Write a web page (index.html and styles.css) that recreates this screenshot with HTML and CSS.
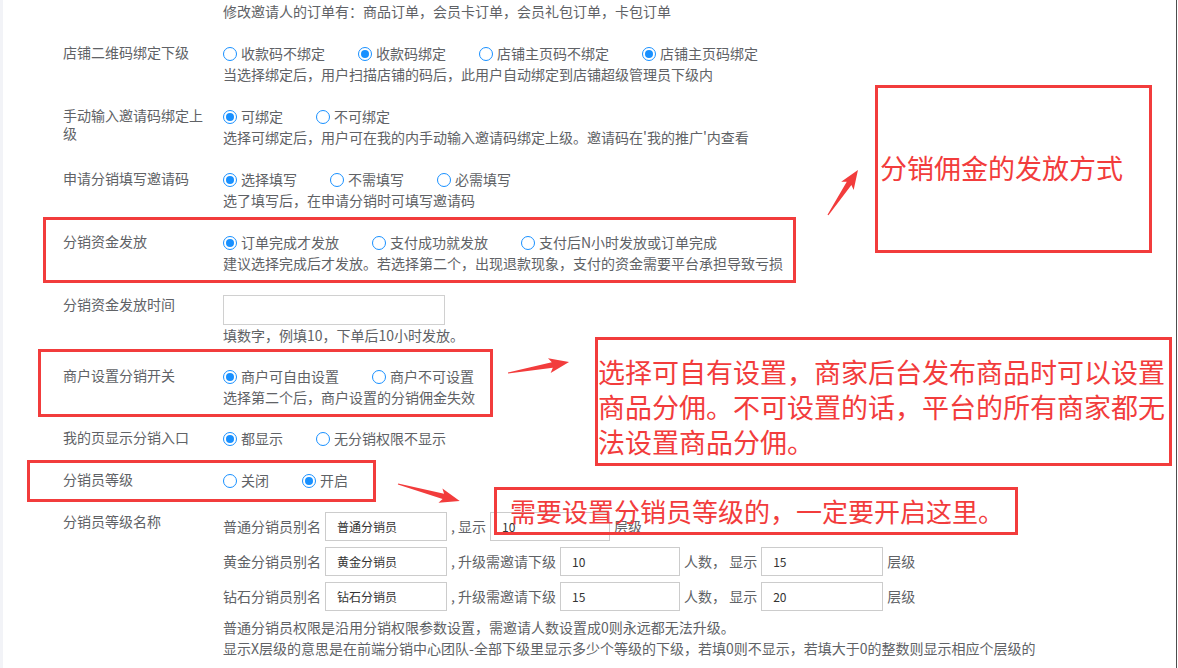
FILE: index.html
```html
<!DOCTYPE html>
<html lang="zh-CN">
<head>
  <meta charset="UTF-8">
  <meta name="viewport" content="width=device-width, initial-scale=1.0">
  <title>分销设置</title>
  <link rel="stylesheet" href="styles.css">
</head>
<body>
  <div class="page">
    <div class="form">
      <div class="row">
        <div class="label"></div>
        <div class="field">
          <p class="tip">修改邀请人的订单有：商品订单，会员卡订单，会员礼包订单，卡包订单</p>
        </div>
      </div>

      <div class="row">
        <div class="label">店铺二维码绑定下级</div>
        <div class="field">
          <div class="radios">
            <label class="radio"><i></i>收款码不绑定</label>
            <label class="radio on"><i></i>收款码绑定</label>
            <label class="radio"><i></i>店铺主页码不绑定</label>
            <label class="radio on"><i></i>店铺主页码绑定</label>
          </div>
          <p class="tip">当选择绑定后，用户扫描店铺的码后，此用户自动绑定到店铺超级管理员下级内</p>
        </div>
      </div>

      <div class="row">
        <div class="label">手动输入邀请码绑定上级</div>
        <div class="field">
          <div class="radios">
            <label class="radio on"><i></i>可绑定</label>
            <label class="radio"><i></i>不可绑定</label>
          </div>
          <p class="tip">选择可绑定后，用户可在我的内手动输入邀请码绑定上级。邀请码在'我的推广'内查看</p>
        </div>
      </div>

      <div class="row">
        <div class="label">申请分销填写邀请码</div>
        <div class="field">
          <div class="radios">
            <label class="radio on"><i></i>选择填写</label>
            <label class="radio"><i></i>不需填写</label>
            <label class="radio"><i></i>必需填写</label>
          </div>
          <p class="tip">选了填写后，在申请分销时可填写邀请码</p>
        </div>
      </div>

      <div class="row">
        <div class="label">分销资金发放</div>
        <div class="field">
          <div class="radios">
            <label class="radio on"><i></i>订单完成才发放</label>
            <label class="radio"><i></i>支付成功就发放</label>
            <label class="radio"><i></i>支付后N小时发放或订单完成</label>
          </div>
          <p class="tip">建议选择完成后才发放。若选择第二个，出现退款现象，支付的资金需要平台承担导致亏损</p>
        </div>
      </div>

      <div class="row">
        <div class="label">分销资金发放时间</div>
        <div class="field">
          <input class="time-input" type="text">
          <p class="tip">填数字，例填10，下单后10小时发放。</p>
        </div>
      </div>

      <div class="row tight">
        <div class="label">商户设置分销开关</div>
        <div class="field">
          <div class="radios">
            <label class="radio on"><i></i>商户可自由设置</label>
            <label class="radio"><i></i>商户不可设置</label>
          </div>
          <p class="tip">选择第二个后，商户设置的分销佣金失效</p>
        </div>
      </div>

      <div class="row tight">
        <div class="label">我的页显示分销入口</div>
        <div class="field">
          <div class="radios">
            <label class="radio on"><i></i>都显示</label>
            <label class="radio"><i></i>无分销权限不显示</label>
          </div>
        </div>
      </div>

      <div class="row">
        <div class="label">分销员等级</div>
        <div class="field">
          <div class="radios">
            <label class="radio"><i></i>关闭</label>
            <label class="radio on"><i></i>开启</label>
          </div>
        </div>
      </div>

      <div class="row">
        <div class="label">分销员等级名称</div>
        <div class="field">
          <div class="level-row">
            <span>普通分销员别名</span>
            <input class="name" type="text" value="普通分销员">
            <span>, 显示</span>
            <input class="num" type="text" value="10">
            <span>层级</span>
          </div>
          <div class="level-row">
            <span>黄金分销员别名</span>
            <input class="name" type="text" value="黄金分销员">
            <span>, 升级需邀请下级</span>
            <input class="num" type="text" value="10">
            <span>人数， 显示</span>
            <input class="name" type="text" value="15">
            <span>层级</span>
          </div>
          <div class="level-row">
            <span>钻石分销员别名</span>
            <input class="name" type="text" value="钻石分销员">
            <span>, 升级需邀请下级</span>
            <input class="num" type="text" value="15">
            <span>人数， 显示</span>
            <input class="name" type="text" value="20">
            <span>层级</span>
          </div>
          <p class="tip level-tip">普通分销员权限是沿用分销权限参数设置，需邀请人数设置成0则永远都无法升级。<br>显示X层级的意思是在前端分销中心团队-全部下级里显示多少个等级的下级，若填0则不显示，若填大于0的整数则显示相应个层级的</p>
        </div>
      </div>
    </div>

    <!-- 标注 -->
    <div class="mark mark-pay"></div>
    <div class="mark mark-shop"></div>
    <div class="mark mark-level"></div>

    <div class="note note-a">分销佣金的发放方式</div>
    <div class="note note-b">选择可自有设置，商家后台发布商品时可以设置<br>商品分佣。不可设置的话，平台的所有商家都无<br>法设置商品分佣。</div>
    <div class="note note-c">需要设置分销员等级的，一定要开启这里。</div>

    <svg class="arrows" width="1178" height="668" viewBox="0 0 1178 668">
      <g fill="#f23c3c">
        <polygon transform="translate(828 215) rotate(-56.3)" points="0,-0.6 38,-2.8 35,-7.5 54,0 35,7.5 38,2.8 0,0.6"/>
        <polygon transform="translate(508 373) rotate(-10.2)" points="0,-0.6 45,-2.8 42,-7.5 62,0 42,7.5 45,2.8 0,0.6"/>
        <polygon transform="translate(398 484) rotate(15.3)" points="0,-0.6 47,-2.8 44,-7.5 64,0 44,7.5 47,2.8 0,0.6"/>
      </g>
    </svg>
  </div>
</body>
</html>
```

FILE: styles.css
```css
body {
  margin: 0;
  font-family: "Noto Sans CJK SC", "Liberation Sans", sans-serif;
  font-size: 14px;
  color: #606266;
  background-color: #ffffff;
}

.page {
  position: relative;
  width: 1177px;
  min-height: 100vh;
  box-sizing: border-box;
  padding: 1px 0 0 63px;
  border-right: 1px solid #4d4d4d;
  background: linear-gradient(to right, #f2f3f7 3px, #ffffff 3px);
}

.form {
  display: flex;
  flex-direction: column;
  gap: 21px;
}

.row {
  display: grid;
  grid-template-columns: 160px 1fr;
}

.row.tight {
  margin-top: -1px;
}

.label {
  line-height: 18px;
  padding-right: 14px;
}

.field {
  line-height: 21px;
}

.tip {
  margin: 0;
  white-space: nowrap;
}

.radios {
  display: flex;
}

.radio {
  display: inline-flex;
  align-items: center;
  margin-right: 33px;
}

.radio i {
  position: relative;
  width: 14px;
  height: 14px;
  box-sizing: border-box;
  border: 1px solid #1890ff;
  border-radius: 50%;
  margin-right: 4px;
  background-color: #ffffff;
}

.radio.on i::after {
  content: "";
  position: absolute;
  top: 2px;
  left: 2px;
  width: 8px;
  height: 8px;
  border-radius: 50%;
  background-color: #1890ff;
}

.time-input {
  display: block;
  width: 222px;
  height: 30px;
  box-sizing: border-box;
  border: 1px solid #d0d0d0;
  margin: 0;
}

.level-row {
  display: flex;
  align-items: center;
  gap: 4px;
  height: 29px;
  white-space: nowrap;
}

.level-row + .level-row {
  margin-top: 6px;
}

.level-row input {
  height: 29px;
  box-sizing: border-box;
  border: 1px solid #cccccc;
  padding: 0 11px;
  margin: 0;
  font-family: "Noto Sans CJK SC", "Liberation Sans", sans-serif;
  font-size: 12px;
  color: #333333;
}

.level-row .name {
  width: 122px;
}

.level-row .num {
  width: 120px;
}

.level-tip {
  margin-top: 6px;
}

/* 标注层 */
.mark,
.note {
  position: absolute;
  box-sizing: border-box;
  border: 3px solid #f23c3c;
}

.mark-pay {
  left: 43px;
  top: 217px;
  width: 753px;
  height: 66px;
}

.mark-shop {
  left: 38px;
  top: 349px;
  width: 455px;
  height: 68px;
}

.mark-level {
  left: 27px;
  top: 460px;
  width: 349px;
  height: 42px;
}

.note {
  color: #f23c3c;
  font-size: 27px;
  line-height: 35px;
  white-space: nowrap;
}

.note-a {
  left: 875px;
  top: 85px;
  width: 277px;
  height: 168px;
  padding: 62px 0 0 2px;
}

.note-b {
  left: 595px;
  top: 337px;
  width: 577px;
  height: 129px;
  padding: 14px 0 0 0;
}

.note-c {
  left: 494px;
  top: 487px;
  width: 524px;
  height: 48px;
  padding: 3px 0 0 13px;
  font-size: 26px;
}

.arrows {
  position: absolute;
  left: 0;
  top: 0;
  pointer-events: none;
}
```
